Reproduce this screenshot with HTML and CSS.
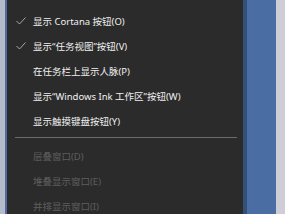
FILE: index.html
```html
<!DOCTYPE html>
<html>
<head>
<meta charset="utf-8">
<link rel="stylesheet" href="styles.css">
</head>
<body>
<div class="screen">
  <div class="edge-light"></div>
  <div class="edge-blue"></div>
  <div class="menu">
    <div class="item">
      <span class="check"><svg width="10" height="8" viewBox="0 0 10 8"><polyline points="0.5,4 3.5,7 9.5,0.5" fill="none" stroke="#a8a8a8" stroke-width="1"/></svg></span>
      <span class="label">显示 Cortana 按钮(O)</span>
    </div>
    <div class="item">
      <span class="check"><svg width="10" height="8" viewBox="0 0 10 8"><polyline points="0.5,4 3.5,7 9.5,0.5" fill="none" stroke="#a8a8a8" stroke-width="1"/></svg></span>
      <span class="label">显示“任务视图”按钮(V)</span>
    </div>
    <div class="item">
      <span class="check"></span>
      <span class="label">在任务栏上显示人脉(P)</span>
    </div>
    <div class="item">
      <span class="check"></span>
      <span class="label">显示“Windows Ink 工作区”按钮(W)</span>
    </div>
    <div class="item">
      <span class="check"></span>
      <span class="label">显示触摸键盘按钮(Y)</span>
    </div>
    <div class="separator"></div>
    <div class="item disabled">
      <span class="check"></span>
      <span class="label">层叠窗口(D)</span>
    </div>
    <div class="item disabled">
      <span class="check"></span>
      <span class="label">堆叠显示窗口(E)</span>
    </div>
    <div class="item disabled">
      <span class="check"></span>
      <span class="label">并排显示窗口(I)</span>
    </div>
  </div>
  <div class="edge-darkblue"></div>
  <div class="edge-bluewide"></div>
  <div class="edge-gray"></div>
</div>
</body>
</html>
```
FILE: styles.css
```css
html, body {
  margin: 0;
  padding: 0;
  background: #2b2b2b;
  overflow: hidden;
}
.screen {
  display: flex;
  width: 285px;
  height: 214px;
  overflow: hidden;
}
.edge-light { width: 5px; background: #b4bccb; flex: none; }
.edge-blue { width: 2px; background: #4e6c9c; flex: none; }
.menu {
  width: 236px;
  flex: none;
  background: #2b2b2b;
  padding-top: 8px;
  font-family: "Noto Sans", "Noto Sans CJK SC", sans-serif;
  font-size: 9.5px;
  color: #f0f0f0;
}
.item {
  height: 25px;
  display: flex;
  align-items: center;
}
.check {
  width: 26px;
  flex: none;
  display: flex;
  align-items: center;
  padding-left: 9px;
  box-sizing: border-box;
  height: 8px;
}
.check svg { display: block; }
.label { white-space: nowrap; }
.disabled { color: #5e5e5e; }
.separator {
  height: 1px;
  background: #6a6a6a;
  margin: 4px 6px 5px 8px;
}
.edge-darkblue { width: 4px; background: #33507a; flex: none; }
.edge-bluewide { width: 29px; background: #4a6da4; flex: none; }
.edge-gray { width: 9px; background: #cfced6; flex: none; }
```
